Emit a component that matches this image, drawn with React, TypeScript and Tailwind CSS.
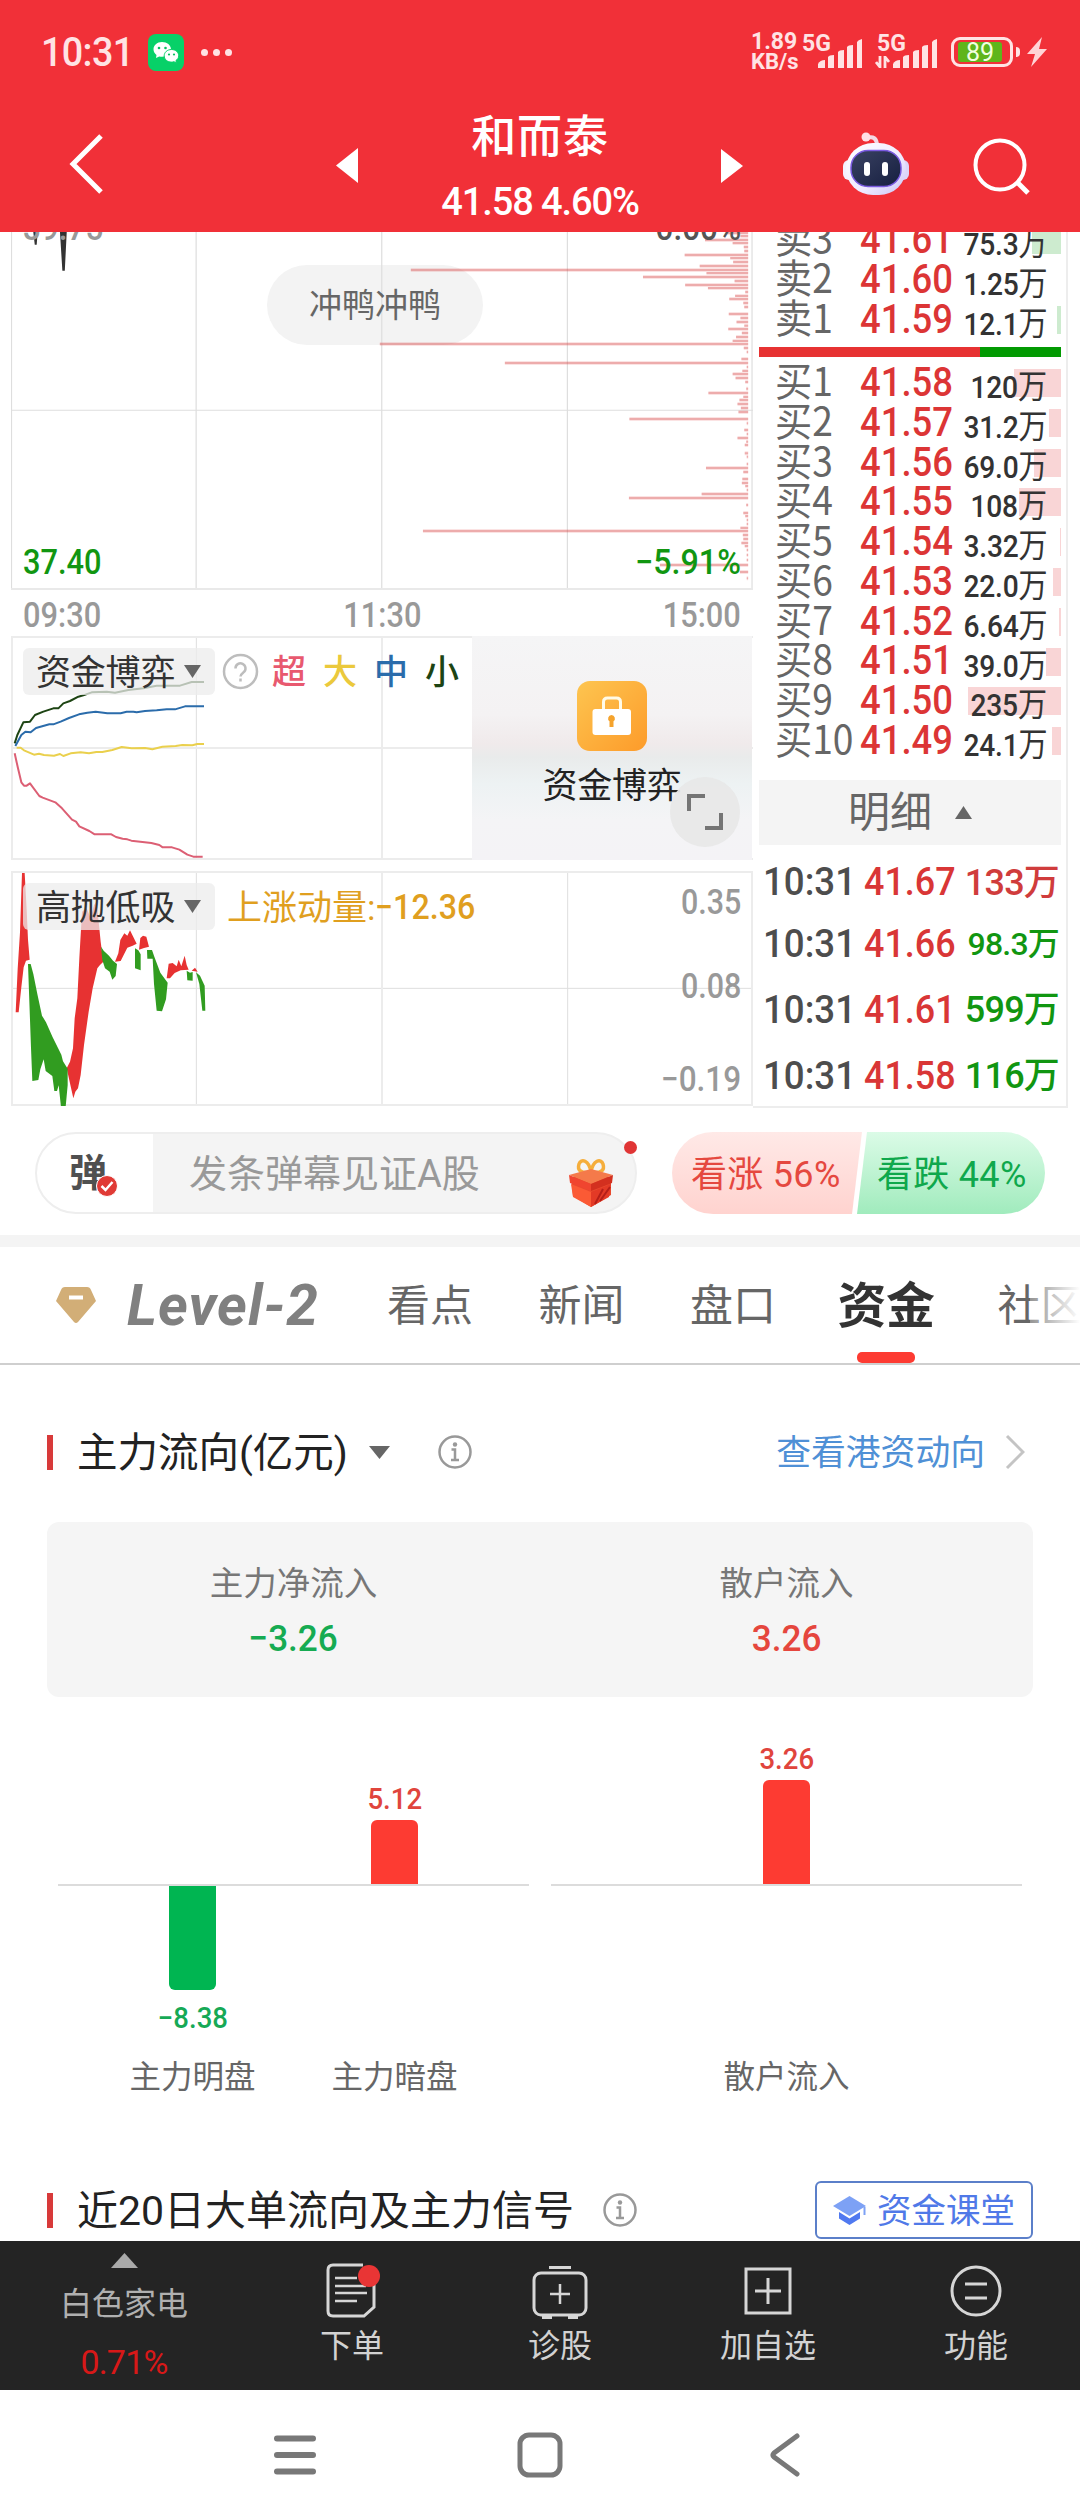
import React from 'react';
import clsx from 'clsx';

const asks = [
  { label: '卖3', price: '41.61', vol: '75.3万', bar: 29 },
  { label: '卖2', price: '41.60', vol: '1.25万', bar: 0 },
  { label: '卖1', price: '41.59', vol: '12.1万', bar: 4 },
];

const bids = [
  { label: '买1', price: '41.58', vol: '120万', bar: 47 },
  { label: '买2', price: '41.57', vol: '31.2万', bar: 12 },
  { label: '买3', price: '41.56', vol: '69.0万', bar: 27 },
  { label: '买4', price: '41.55', vol: '108万', bar: 42 },
  { label: '买5', price: '41.54', vol: '3.32万', bar: 1 },
  { label: '买6', price: '41.53', vol: '22.0万', bar: 8 },
  { label: '买7', price: '41.52', vol: '6.64万', bar: 2 },
  { label: '买8', price: '41.51', vol: '39.0万', bar: 15 },
  { label: '买9', price: '41.50', vol: '235万', bar: 93 },
  { label: '买10', price: '41.49', vol: '24.1万', bar: 9 },
];

const trades = [
  { time: '10:31', price: '41.67', vol: '133万', up: true, h: 'h-[68px]' },
  { time: '10:31', price: '41.66', vol: '98.3万', up: false, h: 'h-[55px]' },
  { time: '10:31', price: '41.61', vol: '599万', up: false, h: 'h-[77px]' },
  { time: '10:31', price: '41.58', vol: '116万', up: false, h: 'h-[55px]' },
];

// [y, start x] of every price level in the volume profile
const profile = [
  [24, 1500], [33, 1528], [45, 1455], [54, 1512], [66, 1535], [78, 1536], [90, 1413], [99, 1507], [111, 1513], [123, 1444],
  [135, 848], [144, 1458], [156, 1327], [168, 1516], [180, 1414], [189, 1461], [201, 1538], [213, 1517], [222, 1505],
  [234, 1534], [246, 1536], [267, 1504], [279, 1528], [291, 1520], [302, 1536], [312, 1503], [324, 1531], [336, 1519],
  [348, 1512], [357, 784], [369, 1535], [381, 1541], [402, 1530], [414, 1042], [426, 1541], [438, 1532], [447, 1512],
  [459, 1518], [471, 1538], [491, 1540], [504, 1462], [516, 1534], [525, 1526], [537, 1522], [549, 1529], [561, 1524],
  [582, 1299], [595, 1541], [615, 1536], [627, 1541], [639, 1522], [650, 1540], [660, 1537], [685, 1537], [695, 1541],
  [717, 1541], [729, 1457], [741, 1534], [762, 1532], [774, 1531], [783, 1538], [795, 1541], [807, 1448], [819, 1298],
  [840, 1540], [864, 1534], [873, 1538], [885, 1541], [897, 1541], [909, 1528], [918, 873], [930, 1533], [942, 1534],
  [954, 1530], [963, 1537], [975, 1541], [990, 1541], [1005, 1541], [1020, 1362], [1041, 1527], [1060, 1541],
];

const tabs = ['看点', '新闻', '盘口'];

const Num: React.FC<{ className?: string; children: React.ReactNode }> = ({ className, children }) => (
  <span className={clsx('inline-block whitespace-nowrap leading-none', className)}>{children}</span>
);

const Signal: React.FC = () => (
  <svg width="44" height="29" viewBox="0 0 44 29" fill="#ffe3e4">
    <path d="M0 29v-4q2-4 7-4v8z" />
    <path d="M10 29V18q1-2 6-2v13z" />
    <path d="M20 29V13q1-2 6-2v18z" />
    <path d="M29 29V8q1-2 6-2v23z" />
    <path d="M39 29V3q1-2 5-3v29z" />
  </svg>
);

const StatusBar: React.FC = () => (
  <div className="flex h-[104px] items-center pl-[41px] pr-[33px] text-[#ffe3e4]">
    <Num className="w-[107px] origin-left scale-x-[.92] text-[41px] font-medium tracking-[-0.7px]">10:31</Num>
    <svg width="36" height="37" viewBox="0 0 36 37">
      <rect width="36" height="37" rx="8" fill="#07d168" />
      <path d="M14 8c-5 0-8.500 3.300-8.500 7.300 0 2.300 1.200 4.300 3 5.600L8 24l3.200-1.600c1 .2 2 .3 3 .3 5 0 8.800-3.300 8.800-7.400S19 8 14 8z" fill="#fff" />
      <path d="M23.500 15.500c-4.300 0-7.300 2.900-7.300 6.300s3 6.300 7.300 6.300c.9 0 1.700-.1 2.500-.4l2.500 1.500-.6-2.600c1.700-1.200 2.800-2.900 2.800-4.800 0-3.400-3-6.300-7.200-6.300z" fill="#fff" stroke="#07d168" strokeWidth="1" />
      <g fill="#07c160">
        <circle cx="11" cy="14" r="1.300" /><circle cx="17.500" cy="14" r="1.300" />
        <circle cx="21" cy="20.500" r="1.100" /><circle cx="26" cy="20.500" r="1.100" />
      </g>
    </svg>
    <div className="ml-[17px] flex gap-[5px]">
      {[0, 1, 2].map((i) => <i key={i} className="size-[7px] rounded-full bg-[#ffe3e4]" />)}
    </div>
    <div className="ml-auto flex items-center">
      <div className="w-[51px] font-bold leading-[20px]">
        <div className="text-[23px]">1.89</div>
        <div className="text-[22px]">KB/s</div>
      </div>
      <div className="relative h-[34px] w-[75px] text-[23px] font-bold leading-[17px]">
        5G
        <div className="absolute left-[16px] top-[4px]"><Signal /></div>
      </div>
      <div className="relative h-[34px] w-[74px] text-[23px] font-bold leading-[17px]">
        5G
        <svg className="absolute left-[-2px] top-[21px]" width="15" height="12" viewBox="0 0 15 12" fill="none" stroke="#ffe3e4" strokeWidth="2.800">
          <path d="M5 0v11L1 6M10 12V1l4 5" />
        </svg>
        <div className="absolute left-[16px] top-[4px]"><Signal /></div>
      </div>
      <div className="flex h-[30px] w-[62px] items-center rounded-[9px] border-[3px] border-[#ffe3e4] px-[4px]">
        <div className="h-[20px] w-[44px] rounded-[3px] bg-[#5fb51b] text-center text-[25px] leading-[21px] text-[#f2ffe0]">89</div>
      </div>
      <div className="ml-[3px] h-[10px] w-[4px] rounded-r bg-[#ffe3e4]" />
      <svg className="ml-[7px]" width="20" height="30" viewBox="0 0 20 30" fill="#ffd4d6"><path d="M15 0 0 17h8L4 30 20 12h-8z" /></svg>
    </div>
  </div>
);

const TitleBar: React.FC = () => (
  <div className="flex h-[128px] items-start text-white">
    <svg className="ml-[68px] mt-[29px]" width="38" height="62" viewBox="0 0 38 62" fill="none" stroke="#fff" strokeWidth="5"><path d="M33 3 5 31l28 28" /></svg>
    <svg className="ml-[230px] mt-[44px]" width="22" height="35" viewBox="0 0 22 35" fill="#fff"><path d="M22 0v35L0 17.500z" /></svg>
    <div className="ml-[68px] w-[228px] text-center">
      <div className="mt-[11px] text-[45px] font-medium leading-[46px] tracking-[0.8px]">和而泰</div>
      <Num className="mt-[22px] text-[38px] font-medium tracking-[-1.100px]">41.58 4.60%</Num>
    </div>
    <svg className="ml-[67px] mt-[45px]" width="22" height="34" viewBox="0 0 22 34" fill="#fff"><path d="M0 0v34l22-17z" /></svg>
    <svg className="ml-[99px] mt-[28px]" width="68" height="64" viewBox="0 0 68 64">
      <defs>
        <linearGradient id="helmet" x1="0" y1="0" x2="1" y2="1"><stop stopColor="#fff" /><stop offset=".6" stopColor="#efeaff" /><stop offset="1" stopColor="#c9c3f5" /></linearGradient>
        <linearGradient id="visor" x1="0" y1="0" x2="1" y2="1"><stop stopColor="#3a4262" /><stop offset="1" stopColor="#161f40" /></linearGradient>
      </defs>
      <path d="M25 6c6-2 10 0 10 8" fill="none" stroke="#f3d9e4" strokeWidth="4" />
      <circle cx="24" cy="5" r="4.500" fill="#ffdfe6" />
      <rect x="1" y="28" width="12" height="20" rx="6" fill="#f4f0ff" />
      <rect x="55" y="28" width="12" height="20" rx="6" fill="#dcd5f8" />
      <rect x="4" y="11" width="60" height="52" rx="27" fill="url(#helmet)" />
      <rect x="9" y="18.500" width="50" height="36" rx="17" fill="url(#visor)" stroke="#7a5ae0" strokeWidth="1.500" />
      <rect x="22" y="30" width="6" height="14" rx="3" fill="#fff" />
      <rect x="40" y="30" width="6" height="14" rx="3" fill="#fff" />
    </svg>
    <svg className="ml-[63px] mt-[34px]" width="58" height="58" viewBox="0 0 58 58" fill="none" stroke="#fff" strokeWidth="4"><circle cx="27" cy="27" r="24.500" /><path d="m44 44 11 11" strokeWidth="5" /></svg>
  </div>
);

const PriceChart: React.FC = () => (
  <div className="relative h-[358px] overflow-hidden">
    <div className="absolute left-[256px] top-[33px] h-[80px] w-[216px] rounded-full bg-[#f3f3f3]" />
    <svg className="absolute inset-0" width="742" height="358" viewBox="23 21 1531 1074" preserveAspectRatio="none" fill="none">
      <path d="M405 21v1074M788 21v1074M1171 21v1074M24 21v1074M1552 21v1074" stroke="#dedede" strokeWidth="2.500" />
      <path d="M23 556h1531" stroke="#dedede" strokeWidth="3" />
      <path d="M23 1092h1531" stroke="#e9e9e9" strokeWidth="6" />
      <path d={profile.map(([y, x]) => `M${x} ${y}H1544`).join('')} stroke="#e03a3a" strokeOpacity=".14" strokeWidth="12" />
      <path d={profile.map(([y, x]) => `M${x} ${y}H1544`).join('')} stroke="#d64a4a" strokeOpacity=".36" strokeWidth="6" />
      <path d="M69 21h9l-2 38h-4zM124 21h14l-4 116h-5z" fill="#333" />
    </svg>
    <span className="absolute left-[298px] top-[57px] text-[33px] leading-[33px] text-[#666]">冲鸭冲鸭</span>
    <Num className="absolute left-[12px] top-[-21px] origin-left scale-x-90 text-[35px] font-medium text-[#999]">39.75</Num>
    <Num className="absolute right-[12px] top-[-21px] origin-right scale-x-90 text-[35px] font-medium text-[#555]">0.00%</Num>
    <Num className="absolute left-[12px] top-[313px] origin-left scale-x-[.88] text-[35px] font-medium text-[#119611]">37.40</Num>
    <Num className="absolute right-[12px] top-[313px] origin-right scale-x-[.92] text-[35px] font-medium text-[#119611]">−5.91%</Num>
  </div>
);

const IndicatorPill: React.FC<{ name: string }> = ({ name }) => (
  <div className="flex h-[47px] w-[192px] items-center rounded-[6px] bg-[#ececec]/75 pl-[13px] text-[35px] leading-none text-[#333]">
    <span className="pt-[3px] tracking-[-0.2px]">{name}</span>
    <svg className="ml-[9px]" width="17" height="13" viewBox="0 0 17 13" fill="#666"><path d="M0 0h17L8.500 13z" /></svg>
  </div>
);

const FundChart: React.FC = () => (
  <div className="relative mt-px h-[224px]">
    <svg className="absolute inset-0" width="742" height="224" viewBox="33 48 2226 672" fill="none">
      <path d="M589 50v667" stroke="#dedede" strokeWidth="3" />
      <path d="M33 51h2226M33 384h2226M33 717h2226M36 50v667M1146 50v667" stroke="#ececec" strokeWidth="6" />
      <g strokeWidth="6" strokeLinejoin="round">
        <path d="m44 370 8-25 18-38 20-2 15-20 25-10 30-10h15l15-15 20-7 25-13 15-4 25-9 45-2 25 3 40-8 45-5 40-8h70l35-11h37" stroke="#1d4413" />
        <path d="m46 378 18-33 12-10 16 2 16-13 40-11h12l22-8 25-11 30-11 25-5 25-3 35 5h40l18-5h20l10 2 25-4 35-2 30-3h25l30-9h57" stroke="#2b6cab" />
        <path d="M50 383h12l10 8 30 13 15-3 15 4 30 2 18-5 10 6 22-8 30-3 25 3 22-4h18l30-6 28-9 30 4 40-1 22 4 30-8 40-2 20-3 30 1 15-4h20" stroke="#ead04d" />
        <path d="m44 400 10 45 10 42 8 10h8l10-7 28 38 10 5 38 14 20 18 30 34 12 6 10 14 30 14 16 10h50l14 8 20 5 14 2 12 4 60 7 24 6 10 7h28l22 7 24 15 18 6h28" stroke="#dc5f74" />
      </g>
    </svg>
    <div className="absolute left-[12px] top-[12px] flex items-center">
      <IndicatorPill name="资金博弈" />
      <svg className="ml-[7px]" width="37" height="37" viewBox="0 0 37 37" fill="none" stroke="#bdbdbd" strokeWidth="2.500">
        <circle cx="18.500" cy="18.500" r="16.500" />
        <path d="M13.500 15.500a5 5 0 1 1 8 3.800c-2 1.500-3 2.200-3 4.200" /><path d="M18.500 25.500v3" />
      </svg>
      <div className="ml-[13px] flex gap-[17px] text-[34px] font-medium leading-none">
        <span className="text-[#e8596f]">超</span>
        <span className="text-[#ebc93c]">大</span>
        <span className="text-[#2b6cab]">中</span>
        <span className="text-[#1d4413]">小</span>
      </div>
    </div>
    <div className="absolute right-[1px] top-0 flex h-[224px] w-[280px] flex-col items-center bg-[linear-gradient(180deg,#f5f5f6_0%,#f4f2f3_35%,#f0eaeb_48%,#e9ebeb_54%,#edf2f3_66%,#f4f4f6_82%,#f4f3f6_100%)]">
      <svg className="mt-[45px]" width="70" height="70" viewBox="0 0 70 70">
        <defs><linearGradient id="gold" x1="0" y1="0" x2="1" y2="1"><stop stopColor="#fdc550" /><stop offset="1" stopColor="#fd9b2a" /></linearGradient></defs>
        <rect width="70" height="70" rx="13" fill="url(#gold)" />
        <path d="M26.500 29v-8q0-4 4-4h9q4 0 4 4v8" fill="none" stroke="#fffbe8" strokeWidth="3" />
        <rect x="15.500" y="28" width="38.500" height="26" rx="3" fill="#fff" />
        <path d="M34.500 34a3.500 3.500 0 0 1 2 6.300V46h-4v-5.700a3.500 3.500 0 0 1 2-6.300z" fill="#f5a32c" />
      </svg>
      <span className="mt-[18px] text-[35px] leading-[35px] tracking-[-0.3px] text-[#222]">资金博弈</span>
    </div>
    <div className="absolute right-[13px] top-[141px] flex size-[70px] items-center justify-center rounded-full bg-[#e8e8e8]/95">
      <svg width="38" height="38" viewBox="0 0 38 38" fill="none" stroke="#757575" strokeWidth="4"><path d="M3 18V3h16M35 20v15H19" /></svg>
    </div>
  </div>
);

const MomentumChart: React.FC = () => (
  <div className="relative mt-[11px] h-[235px] text-[35px] font-medium">
    <svg className="absolute inset-0" width="742" height="235" viewBox="33 756 2226 705" fill="none">
      <path d="M589 756v705M1703 756v705M33 1108h2226" stroke="#dedede" strokeWidth="3" />
      <path d="M33 759h2226M33 1458h2226M36 756v705M1146 756v705M2256 756v705" stroke="#ececec" strokeWidth="6" />
      <path fill="#e73232" d="m66 762 8 0 6 110 4 90 5 60-11 3-7 20-7 60-8 75h-9l6-130 7-110zM200 1348l10-20 9-40 5-90 8-60 6-120 8-140 14-10 12 30 10-40 8-10 12 120 8 60-10 10-8 10-14 60-12 70-14 100-10 90-8 40-8 10-6 20zM345 1028l10-25 6-40 12-20 9 7 8-16 10 20 10 20-12 6-16 6-20 40zM417 992l4-35 8-7 10 3 8 30-15 4zM500 1078l6-44 12-2 12 10 6-20 8 20 10-32 6 28 6 14-24 2-18 8-14 16zM575 1055l10-9 8 12z" />
      <path fill="#319c20" d="M84 1035h8l8 30 12 60 14 65 12 20 20 45 16 32 10 20 5 20 14 22v50l-7 75h-12l-8-75-5 17h-8l-6-45-20-15-6-35-10 30-6 32-18 3-4-100zM303 983l8 12 16 15 12 15 12 10-4 36-10 11-8-24-14-10-8-25zM405 988l10 6 7 12v48l-17-6zM441 993h15l7 20 18 48 22 30-5 50-12 36-16-2-8-80-4-76-16 0zM560 1055l10 6 8-2v26l-16-1zM588 1060l12 10 14 30 2 75h-9l-9-80z" />
    </svg>
    <div className="absolute left-[12px] top-[12px] flex items-center font-normal">
      <IndicatorPill name="高抛低吸" />
      <span className="ml-[12px] pt-[3px] text-[35px] leading-none text-[#e09f1f]">上涨动量:</span>
      <Num className="origin-left scale-x-[.92] pt-[2px] font-medium text-[#e09f1f]">−12.36</Num>
    </div>
    <div className="absolute bottom-[14px] right-[12px] top-[14px] flex flex-col items-end text-[#999]">
      <Num className="origin-right scale-x-[.87]">0.35</Num>
      <Num className="mt-[49px] origin-right scale-x-[.87]">0.08</Num>
      <Num className="mt-[58px] origin-right scale-x-[.9]">−0.19</Num>
    </div>
  </div>
);

const BookRow: React.FC<{ row: (typeof asks)[number]; ask?: boolean }> = ({ row, ask }) => (
  <div className={clsx('relative flex items-center', ask ? 'h-[40px]' : 'h-[39.800px]')}>
    <div className={clsx('absolute right-0 top-[6px] h-[28px]', ask ? 'bg-[#cdebcf]' : 'bg-[#f9d5d6]')} style={{ width: row.bar }} />
    <span className="relative w-[98px] pl-[16px]">
      <Num className="relative top-[-2px] origin-left scale-x-[.93] font-['Noto_Sans_CJK_SC'] text-[40px] text-[#666]">{row.label}</Num>
    </span>
    <Num className="relative ml-[3px] w-[100px] origin-left scale-x-[.91] text-[40px] font-medium text-[#dc3535]">{row.price}</Num>
    <Num className="absolute right-[14px] top-[7px] origin-right scale-x-[.88] text-[32px] font-medium tracking-[-0.2px] text-[#333]">{row.vol.slice(0, -1)}<span className="text-[33px] font-normal">万</span></Num>
  </div>
);

const OrderBook: React.FC = () => (
  <div className="h-[876px] w-[315px] overflow-hidden border-b-2 border-r-2 border-[#ededed] pl-[6px] pr-[5px]">
    <div className="-mt-[12px]">{asks.map((r) => <BookRow key={r.label} row={r} ask />)}</div>
    <div className="mt-[7px] flex h-[10px]"><div className="w-[221px] bg-[#e73232]" /><div className="flex-1 bg-[#029a02]" /></div>
    <div className="mt-[6px]">{bids.map((r) => <BookRow key={r.label} row={r} />)}</div>
    <div className="mt-[19px] flex h-[65px] items-center justify-center gap-[23px] bg-[#f4f4f4] text-[42px] leading-none text-[#666]">
      <span className="pt-[2px]">明细</span>
      <svg width="17" height="13" viewBox="0 0 17 13" fill="#666"><path d="M0 13h17L8.500 0z" /></svg>
    </div>
    <div className="pt-[4px]">
      {trades.map((t) => (
        <div key={t.price} className={clsx('flex items-center pl-[4px] font-medium', t.h)}>
          <Num className="w-[101px] origin-left scale-x-[.94] text-[39px] text-[#4d4d4d]">{t.time}</Num>
          <Num className="w-[94px] origin-left scale-x-[.92] text-[39px] text-[#d93636]">{t.price}</Num>
          <Num className={clsx('ml-auto mr-[2px] tracking-[-0.8px]', t.vol.length > 4 ? 'text-[32px]' : 'text-[36px]', t.up ? 'text-[#d03c3c]' : 'text-[#119611]')}>{t.vol}</Num>
        </div>
      ))}
    </div>
  </div>
);

const DanmuBar: React.FC = () => (
  <div className="flex h-[117px] items-start pl-[35px] pt-[14px]">
    <div className="relative flex h-[82px] w-[602px] items-center overflow-visible rounded-full border-2 border-[#eeeeee] bg-[linear-gradient(90deg,#fff_116px,#f4f4f4_116px)]">
      <span className="ml-[32px] text-[38px] font-bold leading-none text-[#505050]">弹</span>
      <svg className="absolute left-[59px] top-[41px]" width="22" height="22" viewBox="0 0 22 22"><circle cx="11" cy="11" r="10.500" fill="#e03a35" stroke="#fff" /><path d="m5.500 11 4 4 7-8" fill="none" stroke="#fff" strokeWidth="2.500" /></svg>
      <span className="ml-[82px] pt-px text-[38px] leading-none text-[#999]">发条弹幕见证A股</span>
      <svg className="absolute right-[20px] top-[24px]" width="48" height="50" viewBox="0 0 48 50">
        <path d="M24 14C14 16 10 12 12 6s10-4 12 8c2-12 10-14 12-8s-2 10-12 8z" fill="none" stroke="#f5ae3c" strokeWidth="3.500" />
        <path d="M4 19h40v18L24 49 6 38z" fill="#e84a2e" />
        <path d="m2 17 22-6 22 6-22 9z" fill="#f47a4a" />
        <path d="m2 17 22 9v7L3 25z" fill="#f0452f" /><path d="m46 17-22 9v7l21-8z" fill="#d3301f" />
        <path d="m4 26 20 8v15L6 39z" fill="#fb5a35" /><path d="m44 26-20 8v15l18-10z" fill="#e33a26" />
        <path d="m33 43 10-14M28 46l8-15" stroke="#b51f18" strokeWidth="2" />
      </svg>
      <i className="absolute right-[-2px] top-[7px] size-[13px] rounded-full bg-[#e03535]" />
    </div>
    <div className="ml-[35px] flex h-[82px] w-[373px] text-[36px] leading-[82px]">
      <div className="mr-[-5px] w-[190px] rounded-l-full bg-linear-to-b from-[#ffe9e7] to-[#ffd3cf] pl-[19px] text-[#e5483f] [clip-path:polygon(0_0,100%_0,calc(100%-10px)_100%,0_100%)]"><span className="relative top-[2px] tracking-[0.3px]">看涨 56%</span></div>
      <div className="w-[188px] rounded-r-full bg-linear-to-b from-[#dbfbe7] to-[#a0ebbd] pl-[20px] text-[#0fa84c] [clip-path:polygon(10px_0,100%_0,100%_100%,0_100%)]"><span className="relative top-[2px] tracking-[0.3px]">看跌 44%</span></div>
    </div>
  </div>
);

const TabBar: React.FC = () => (
  <div className="relative flex h-[118px] items-center overflow-hidden whitespace-nowrap border-b-2 border-[#cfcfcf] pl-[56px] text-[43px] leading-none text-[#666]">
    <svg className="shrink-0" width="40" height="36" viewBox="0 0 40 36"><path d="M9 0h22q3 0 4 3l5 11-18 21q-2 2-4 0L0 14 5 3q1-3 4-3z" fill="#d2ae77" /><path d="M13 10.500h14" stroke="#fff" strokeWidth="4" /></svg>
    <span className="ml-[31px] w-[260px] shrink-0 text-[57px] font-bold italic tracking-[1px] text-[#808080]">Level-2</span>
    {tabs.map((t) => <span key={t} className="w-[151.500px] shrink-0 pt-[2px]">{t}</span>)}
    <span className="ml-[-4px] w-[160px] shrink-0 pt-[2px] text-[49px] font-bold tracking-[-0.5px] text-[#333]">资金</span>
    <span className="shrink-0 pt-[2px]">社区</span>
    <div className="absolute right-0 top-0 h-full w-[50px] bg-linear-to-r from-white/30 to-white" />
    <i className="absolute bottom-0 left-[857px] h-[11px] w-[58px] rounded-[5px] bg-[#fd3b32]" />
  </div>
);

const InfoIcon: React.FC<{ className?: string }> = ({ className }) => (
  <svg className={className} width="34" height="34" viewBox="0 0 34 34" fill="none" stroke="#999" strokeWidth="2.500">
    <circle cx="17" cy="17" r="15.500" /><circle cx="17" cy="9.500" r="2.200" fill="#999" stroke="none" /><path d="M13.500 14.500H17V25m-4 0h8" />
  </svg>
);

const Column: React.FC<{ name: string; value: string; height: number; down?: boolean }> = ({ name, value, height, down }) => (
  <div className="flex w-[202px] flex-col items-center">
    <div className="flex h-[106px] flex-col items-center justify-end">
      {!down && (
        <>
          <Num className="mb-[6px] scale-x-95 text-[29px] font-medium text-[#e0453d]">{value}</Num>
          <div className="w-[47px] shrink-0 rounded-t-[6px] bg-[#fd3b32]" style={{ height }} />
        </>
      )}
    </div>
    <div className="mt-[2px] flex h-[174px] flex-col items-center">
      {down && (
        <>
          <div className="w-[47px] shrink-0 rounded-b-[6px] bg-[#00b551]" style={{ height }} />
          <Num className="mt-[14px] scale-x-95 text-[29px] font-medium text-[#16a956]">{value}</Num>
        </>
      )}
    </div>
    <span className="whitespace-nowrap pt-px text-[31.500px] leading-[34px] text-[#666]">{name}</span>
  </div>
);

const FlowSection: React.FC = () => (
  <section className="h-[876px] overflow-hidden px-[47px]">
    <div className="mt-[62px] flex h-[50px] items-center">
      <i className="h-[35px] w-[6px] bg-[#d83a3a]" />
      <h2 className="ml-[24px] w-[292px] whitespace-nowrap pt-[2px] text-[40.500px] leading-none text-[#222]">主力流向(亿元)</h2>
      <svg width="21" height="13" viewBox="0 0 21 13" fill="#666"><path d="M0 0h21L10.500 13z" /></svg>
      <InfoIcon className="ml-[48px]" />
      <span className="ml-auto pt-[2px] text-[34.800px] leading-none text-[#4f90d6]">查看港资动向</span>
      <svg className="ml-[20px] mr-[8px]" width="20" height="36" viewBox="0 0 20 36" fill="none" stroke="#c4c4c4" strokeWidth="3"><path d="m2 2 16 16L2 34" /></svg>
    </div>
    <div className="mt-[45px] grid h-[175px] grid-cols-2 rounded-[12px] bg-[#f5f5f5] pt-[44px] text-center">
      <div>
        <div className="text-[33.500px] leading-[36px] text-[#777]">主力净流入</div>
        <Num className="mt-[18px] scale-x-95 text-[37px] font-medium text-[#16ab52]">−3.26</Num>
      </div>
      <div>
        <div className="text-[33.500px] leading-[36px] text-[#777]">散户流入</div>
        <Num className="mt-[18px] scale-x-95 text-[37px] font-medium text-[#e5463d]">3.26</Num>
      </div>
    </div>
    <div className="mt-[81px] flex gap-[22px] px-[11px]">
      <div className="flex w-[471px] justify-center bg-[linear-gradient(#dcdcdc,#dcdcdc)] bg-[length:100%_2px] bg-[position:0_106px] bg-no-repeat">
        <Column name="主力明盘" value="−8.38" height={104} down />
        <Column name="主力暗盘" value="5.12" height={64} />
      </div>
      <div className="flex w-[471px] justify-center bg-[linear-gradient(#dcdcdc,#dcdcdc)] bg-[length:100%_2px] bg-[position:0_106px] bg-no-repeat">
        <Column name="散户流入" value="3.26" height={104} />
      </div>
    </div>
    <div className="mt-[86px] flex h-[58px] items-center">
      <i className="h-[35px] w-[6px] bg-[#d83a3a]" />
      <h2 className="ml-[24px] pt-[2px] text-[41px] leading-none text-[#222]">近20日大单流向及主力信号</h2>
      <InfoIcon className="ml-[29px]" />
      <div className="ml-auto flex h-[58px] w-[218px] items-center rounded-[6px] border-2 border-[#5b7fc9] pl-[16px] text-[34.500px] leading-none text-[#5079e8]">
        <svg className="mr-[11px]" width="33" height="29" viewBox="0 0 33 29">
          <path d="M16.500 0 33 10 16.500 20 0 10z" fill="#7da1f5" />
          <path d="M6 16l10.500 6.500L27 16v6.500L16.500 29 6 22.500z" fill="#5079f0" />
          <path d="M31.500 11v8" stroke="#7da1f5" strokeWidth="2" />
        </svg>
        <span className="pt-[2px]">资金课堂</span>
      </div>
    </div>
  </section>
);

const actions = [
  {
    name: '下单',
    icon: <><path d="M50 20v24L40 53H9q-5 0-5-5V7q0-5 5-5h30" /><path d="M11 15h22M11 23h31M11 30h32M11 38h22" strokeWidth="2.500" /><circle cx="45" cy="13" r="11" fill="#e93535" stroke="none" /></>,
  },
  { name: '诊股', icon: <><rect x="2" y="10" width="52" height="42" rx="7" /><path d="M17 4.500h22" /><path d="M10 54h10M36 54h10" strokeWidth="4" /><path d="M28 21v20M18 31h20" strokeWidth="2.500" /></> },
  { name: '加自选', icon: <><rect x="6" y="6" width="44" height="44" /><path d="M28 15v26M15 28h26" /></> },
  { name: '功能', icon: <><circle cx="28" cy="28" r="24" /><path d="M17 21h22M17 35h22" /></> },
];

const BottomBar: React.FC = () => (
  <div className="flex h-[149px] bg-[#242424] text-[32px] leading-none text-[#d2d2d2]">
    <div className="flex w-[248px] flex-col items-center pt-[12px]">
      <svg width="27" height="15" viewBox="0 0 27 15" fill="#aaa"><path d="M13.500 0 27 15H0z" /></svg>
      <span className="mt-[20px] text-[#b0b0b0]">白色家电</span>
      <span className="mt-[25px] text-[34px] tracking-[-0.8px] text-[#d81818]">0.71%</span>
    </div>
    {actions.map((a) => (
      <div key={a.name} className="flex w-[208px] flex-col items-center pt-[22px]">
        <svg width="56" height="56" viewBox="0 0 56 56" fill="none" stroke="#d6d6d6" strokeWidth="3">{a.icon}</svg>
        <span className="mt-[11px] whitespace-nowrap">{a.name}</span>
      </div>
    ))}
  </div>
);

const NavBar: React.FC = () => (
  <div className="flex h-[130px] items-center justify-center gap-[199px] bg-white">
    <svg width="46" height="46" viewBox="0 0 46 46" stroke="#787878" strokeWidth="6" strokeLinecap="round"><path d="M5 6.500h36M5 23h36M5 39.500h36" /></svg>
    <svg width="46" height="46" viewBox="0 0 46 46" fill="none" stroke="#787878" strokeWidth="5"><rect x="3" y="3" width="40" height="40" rx="9" /></svg>
    <svg width="46" height="46" viewBox="0 0 46 46" fill="none" stroke="#787878" strokeWidth="5" strokeLinecap="round" strokeLinejoin="round"><path d="M35 4 12 21q-2 2 0 4l23 17" /></svg>
  </div>
);

export default function App() {
  return (
    <div className="h-[2520px] w-[1080px] overflow-hidden bg-white font-[Roboto,'Noto_Sans_CJK_SC',sans-serif]">
      <header className="h-[232px] bg-[#f13038]">
        <StatusBar />
        <TitleBar />
      </header>
      <div className="flex h-[886px] pl-[11px]">
        <div className="w-[742px]">
          <PriceChart />
          <div className="flex h-[45px] items-center justify-between px-[12px] pt-[5px] text-[35px] font-medium text-[#999]">
            <Num className="origin-left scale-x-[.88]">09:30</Num>
            <Num className="scale-x-[.88]">11:30</Num>
            <Num className="origin-right scale-x-[.88]">15:00</Num>
          </div>
          <FundChart />
          <MomentumChart />
        </div>
        <OrderBook />
      </div>
      <DanmuBar />
      <div className="h-[12px] bg-[#f4f4f4]" />
      <TabBar />
      <FlowSection />
      <BottomBar />
      <NavBar />
    </div>
  );
}
